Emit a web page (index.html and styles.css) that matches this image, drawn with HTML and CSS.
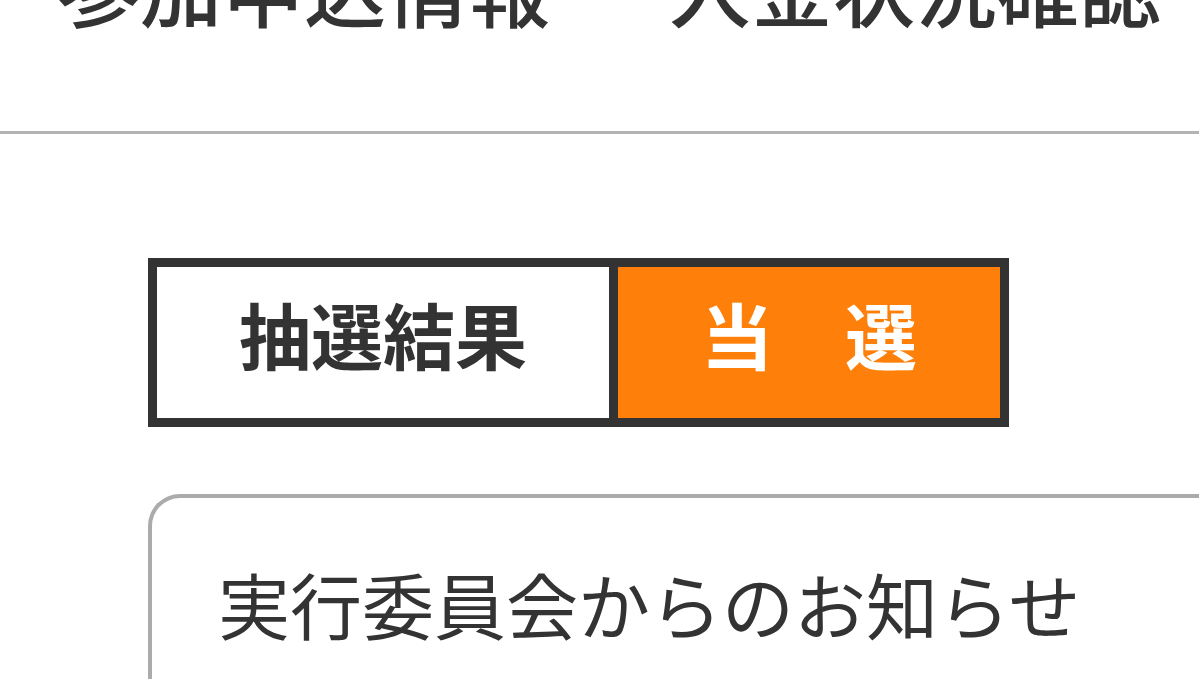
FILE: index.html
```html
<!DOCTYPE html>
<html lang="ja">
<head>
<meta charset="utf-8">
<title>抽選結果</title>
<link rel="stylesheet" href="styles.css">
</head>
<body>
<header class="page-header">
  <h1 class="page-title">参加申込情報 ・ 入金状況確認</h1>
</header>
<main class="content">
  <div class="result">
    <div class="result-label">抽選結果</div>
    <div class="result-value">当　選</div>
  </div>
  <section class="notice">
    <h2 class="notice-title">実行委員会からのお知らせ</h2>
  </section>
</main>
</body>
</html>
```

FILE: styles.css
```css
html, body {
  margin: 0;
  padding: 0;
  background: #ffffff;
  overflow: hidden;
}
body {
  width: 1199px;
  height: 679px;
  font-family: "Noto Sans CJK JP", "Noto Sans", sans-serif;
  color: #333333;
}
.page-header {
  margin-top: -55px;
  padding: 0 0 104px 58px;
  border-bottom: 3px solid #b3b3b3;
}
.page-title {
  margin: 0;
  font-size: 82px;
  line-height: 1;
  font-weight: 500;
  white-space: nowrap;
}
.content {
  padding: 124px 0 0 148px;
}
.result {
  display: grid;
  grid-template-columns: 452px 382px;
  gap: 9px;
  padding: 9px;
  width: max-content;
  background: #333333;
}
.result-label,
.result-value {
  height: 151px;
  box-sizing: border-box;
  padding-bottom: 20px;
  display: flex;
  align-items: center;
  justify-content: center;
  font-size: 72px;
  line-height: 1;
  font-weight: 700;
}
.result-label {
  background: #ffffff;
  color: #333333;
}
.result-value {
  background: #fe800a;
  color: #ffffff;
}
.notice {
  margin-top: 67px;
  width: 1150px;
  border: 4px solid #ababab;
  border-right: none;
  border-radius: 32px 0 0 0;
  padding: 69px 0 60px 66px;
}
.notice-title {
  margin: 0;
  font-size: 72px;
  line-height: 1;
  font-weight: 400;
  color: #333333;
}
```
